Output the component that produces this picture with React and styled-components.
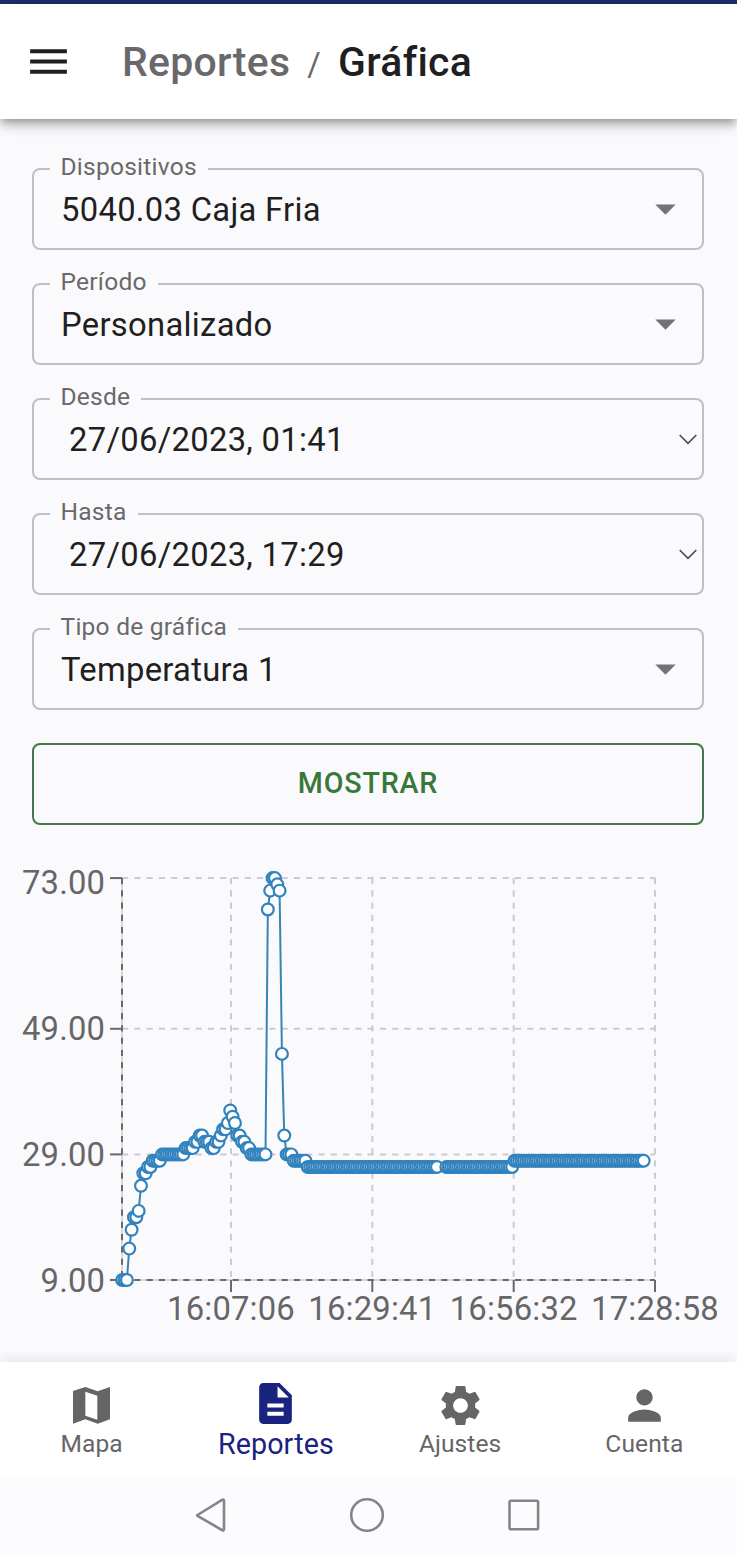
import React from "react";
import styled, { createGlobalStyle } from "styled-components";
import { MdMenu, MdArrowDropDown, MdDescription, MdSettings, MdPerson } from "react-icons/md";

const GlobalStyle = createGlobalStyle`
  *, *::before, *::after { box-sizing: border-box; }
  body {
    margin: 0;
    background: #fafafc;
    font-family: Roboto, "Liberation Sans", sans-serif;
    color: #1f1f21;
  }
`;

const Screen = styled.div`
  width: 737px;
  height: 1555px;
  display: flex;
  flex-direction: column;
  overflow: hidden;
  background: #fafafc;
`;

const StatusStrip = styled.div`
  height: 4px;
  flex: none;
  background: #1f2d6b;
`;

const AppBar = styled.header`
  height: 115px;
  flex: none;
  display: flex;
  align-items: center;
  padding: 0 24px;
  background: #fff;
  position: relative;
  box-shadow: 0 4px 8px -2px rgba(0, 0, 0, 0.3), 0 8px 10px 0 rgba(0, 0, 0, 0.13),
    0 2px 20px 0 rgba(0, 0, 0, 0.1);
`;

const MenuButton = styled.button`
  border: 0;
  padding: 0;
  margin-right: 49px;
  background: none;
  display: flex;
  font-size: 49px;
  color: #1f1f21;
`;

const Breadcrumb = styled.nav`
  display: flex;
  align-items: baseline;
  padding-top: 3px;
  font-size: 40.9px;
  line-height: 60px;
  font-weight: 500;
  letter-spacing: 0.0075em;
`;

const Crumb = styled.span`
  color: ${(p) => (p.$current ? "#1f1f21" : "#69696b")};
`;

const Separator = styled.span`
  margin: 0 17px;
  font-size: 32.7px;
  font-weight: 400;
  color: #69696b;
`;

const Form = styled.form`
  flex: none;
  display: flex;
  flex-direction: column;
  gap: 33px;
  padding: 49px 33px 0 32px;
`;

const Field = styled.div`
  position: relative;
  height: 82px;
  display: flex;
  align-items: center;
  justify-content: space-between;
  padding: 0 ${(p) => (p.$date ? "5px 0 35px" : "12px 0 27px")};
  border: 2px solid #c0c0c3;
  border-radius: 8px;
`;

const FieldLabel = styled.label`
  position: absolute;
  top: -19px;
  left: 16px;
  padding: 0 11px 0 10.5px;
  background: #fafafc;
  color: #69696b;
  font-size: 24.56px;
  line-height: 32px;
  letter-spacing: 0.00938em;
`;

const FieldValue = styled.span`
  padding-top: 2px;
  font-size: 32.75px;
  line-height: 40px;
  letter-spacing: 0.00938em;
`;

const DropIcon = styled(MdArrowDropDown)`
  margin-bottom: 1px;
  font-size: 49px;
  color: #737375;
`;

const ThinChevron = styled.svg`
  width: 18px;
  height: 11px;
  fill: none;
  stroke: #4a4a4c;
  stroke-width: 1.6;
`;

const ShowButton = styled.button`
  height: 82px;
  padding: 0 0 3px;
  border: 2px solid #44784a;
  border-radius: 8px;
  background: transparent;
  font: 500 28.66px Roboto, "Liberation Sans", sans-serif;
  letter-spacing: 0.02857em;
  color: #37783b;
`;

const ChartArea = styled.section`
  flex: 1;
  min-height: 0;
  margin-top: 25px;
`;

const ChartSvg = styled.svg`
  display: block;
  width: 737px;
  height: 500px;
`;

const GridLine = styled.line`
  stroke: #ccccce;
  stroke-width: 2;
  stroke-dasharray: 6.14 6.14;
`;

const AxisLine = styled.line`
  stroke: #69696b;
  stroke-width: 2;
  stroke-dasharray: 6.14 6.14;
`;

const AxisUnderlay = styled.line`
  stroke: #ccccce;
  stroke-width: 1.5;
`;

const TickMark = styled.line`
  stroke: #69696b;
  stroke-width: 2;
`;

const TickText = styled.text`
  fill: #666668;
  font-size: 32.75px;
  letter-spacing: 0.2px;
  text-anchor: ${(p) => p.$anchor};
`;

const SeriesLine = styled.polyline`
  fill: none;
  stroke: #3a84b5;
  stroke-width: 2;
`;

const Dot = styled.circle`
  fill: #fff;
  stroke: #3182bd;
  stroke-width: 2.2;
`;

const BottomNav = styled.nav`
  position: relative;
  flex: none;
  height: 114px;
  display: flex;
  background: #fff;
  box-shadow: 0 0 14px rgba(0, 0, 0, 0.12);
`;

const NavItem = styled.a`
  flex: 1 1 0;
  display: flex;
  flex-direction: column;
  align-items: center;
  padding-top: ${(p) => (p.$active ? "17px" : "19px")};
  padding-right: 1px;
  color: ${(p) => (p.$active ? "#1a237e" : "#656567")};
  font-size: ${(p) => (p.$active ? "28.66px" : "24.56px")};
  line-height: ${(p) => (p.$active ? "32px" : "28px")};
`;

const NavIcon = styled.span`
  display: flex;
  align-items: center;
  justify-content: center;
  width: 49px;
  height: 49px;
  font-size: 49px;
`;

const NavLabel = styled.span`
  letter-spacing: 0.004em;
`;

const SystemBar = styled.footer`
  position: relative;
  flex: none;
  height: 79px;
  display: flex;
  align-items: center;
  justify-content: center;
  gap: 121px;
  padding: 0 3px 1px 0;
  background: #fcfbfd;
`;

const SystemIcon = styled.svg`
  width: 36px;
  height: 36px;
  fill: none;
  stroke: #858587;
  stroke-width: 2.6;
  stroke-linejoin: round;
`;

const fields = [
  { label: "Dispositivos", value: "5040.03 Caja Fria" },
  { label: "Período", value: "Personalizado" },
  { label: "Desde", value: "27/06/2023, 01:41", date: true },
  { label: "Hasta", value: "27/06/2023, 17:29", date: true },
  { label: "Tipo de gráfica", value: "Temperatura 1" },
];

// Runs of equal readings: [first sample, last sample, temperature]
const runs = [
  [0, 2, 9], [3, 3, 14], [4, 4, 17], [5, 6, 19], [7, 7, 20], [8, 8, 24],
  [9, 10, 26], [11, 12, 27], [13, 16, 28], [17, 26, 29], [27, 30, 30],
  [31, 32, 31], [33, 34, 32], [35, 37, 31], [38, 39, 30], [40, 41, 31],
  [42, 42, 32], [43, 44, 33], [45, 45, 34], [46, 46, 36], [47, 47, 35],
  [48, 48, 34], [49, 50, 32], [51, 52, 31], [53, 54, 30], [55, 61, 29],
  [62, 62, 68], [63, 63, 71], [64, 65, 73], [66, 66, 72], [67, 67, 71],
  [68, 68, 45], [69, 69, 32], [70, 72, 29], [73, 78, 28], [79, 134, 27],
  [138, 166, 27], [167, 222, 28],
];

const xAt = (i) => 122.2 + i * 2.349;
const yAt = (v) => 1280 - (v - 9) * 6.28;

const points = runs.flatMap(([from, to, value]) =>
  Array.from({ length: to - from + 1 }, (_, k) => ({ x: xAt(from + k), y: yAt(value) }))
);

const yTicks = [73, 49, 29, 9];
const xTicks = [
  { x: 231, text: "16:07:06" },
  { x: 372.3, text: "16:29:41" },
  { x: 513.7, text: "16:56:32" },
  { x: 655, text: "17:28:58" },
];

function TemperatureChart() {
  return (
    <ChartSvg viewBox="0 850 737 500">
      {yTicks.slice(0, 3).map((v) => (
        <GridLine key={v} x1="122" x2="655" y1={yAt(v)} y2={yAt(v)} />
      ))}
      {xTicks.map((t) => (
        <GridLine key={t.x} x1={t.x} x2={t.x} y1="878" y2="1280" />
      ))}
      <AxisUnderlay x1="122" x2="655" y1="1280" y2="1280" />
      <AxisUnderlay x1="122" x2="122" y1="878" y2="1280" />
      <AxisLine x1="122" x2="655" y1="1280" y2="1280" />
      <AxisLine x1="122" x2="122" y1="878" y2="1280" />
      {yTicks.map((v) => (
        <React.Fragment key={v}>
          <TickMark x1="110" x2="122" y1={yAt(v)} y2={yAt(v)} />
          <TickText $anchor="end" x="105.2" y={yAt(v) + (v === 73 ? 15.5 : 11.5)}>
            {v.toFixed(2)}
          </TickText>
        </React.Fragment>
      ))}
      {xTicks.map((t) => (
        <React.Fragment key={t.x}>
          <TickMark x1={t.x} x2={t.x} y1="1280" y2="1292" />
          <TickText $anchor="middle" x={t.x} y="1320">
            {t.text}
          </TickText>
        </React.Fragment>
      ))}
      <SeriesLine points={points.map((p) => `${p.x},${p.y}`).join(" ")} />
      {points.map((p) => (
        <Dot key={p.x} cx={p.x} cy={p.y} r="5.9" />
      ))}
    </ChartSvg>
  );
}

function MapIcon() {
  return (
    <svg width="37" height="37" viewBox="0 0 111 111" fill="currentColor">
      <path
        fillRule="evenodd"
        d="M0 12 37 0 74 13 111 0V97L74 110 37 97 0 110ZM37 14V86L73 98V26Z"
      />
    </svg>
  );
}

const navItems = [
  { label: "Mapa", icon: <MapIcon /> },
  { label: "Reportes", icon: <MdDescription />, active: true },
  { label: "Ajustes", icon: <MdSettings /> },
  { label: "Cuenta", icon: <MdPerson /> },
];

export default function App() {
  return (
    <Screen>
      <GlobalStyle />
      <StatusStrip />
      <AppBar>
        <MenuButton type="button" aria-label="Menú">
          <MdMenu />
        </MenuButton>
        <Breadcrumb>
          <Crumb>Reportes</Crumb>
          <Separator>/</Separator>
          <Crumb $current>Gráfica</Crumb>
        </Breadcrumb>
      </AppBar>
      <Form>
        {fields.map((f) => (
          <Field key={f.label} $date={f.date}>
            <FieldLabel>{f.label}</FieldLabel>
            <FieldValue>{f.value}</FieldValue>
            {f.date ? (
              <ThinChevron viewBox="0 0 18 11">
                <path d="M.7 1 9 9.3 17.3 1" />
              </ThinChevron>
            ) : (
              <DropIcon />
            )}
          </Field>
        ))}
        <ShowButton type="button">MOSTRAR</ShowButton>
      </Form>
      <ChartArea>
        <TemperatureChart />
      </ChartArea>
      <BottomNav>
        {navItems.map((n) => (
          <NavItem key={n.label} $active={n.active}>
            <NavIcon>{n.icon}</NavIcon>
            <NavLabel>{n.label}</NavLabel>
          </NavItem>
        ))}
      </BottomNav>
      <SystemBar>
        <SystemIcon viewBox="0 0 36 36">
          <path d="M5.5 18 30.5 2.7Q32 2 32 4V32Q32 34 30.5 33.3L5.5 18.8Q4.8 18.4 5.5 18Z" />
        </SystemIcon>
        <SystemIcon viewBox="0 0 36 36">
          <circle cx="18" cy="18" r="15.8" />
        </SystemIcon>
        <SystemIcon viewBox="0 0 36 36">
          <rect x="3.5" y="3.700" width="28.6" height="28.6" rx="1.5" />
        </SystemIcon>
      </SystemBar>
    </Screen>
  );
}
